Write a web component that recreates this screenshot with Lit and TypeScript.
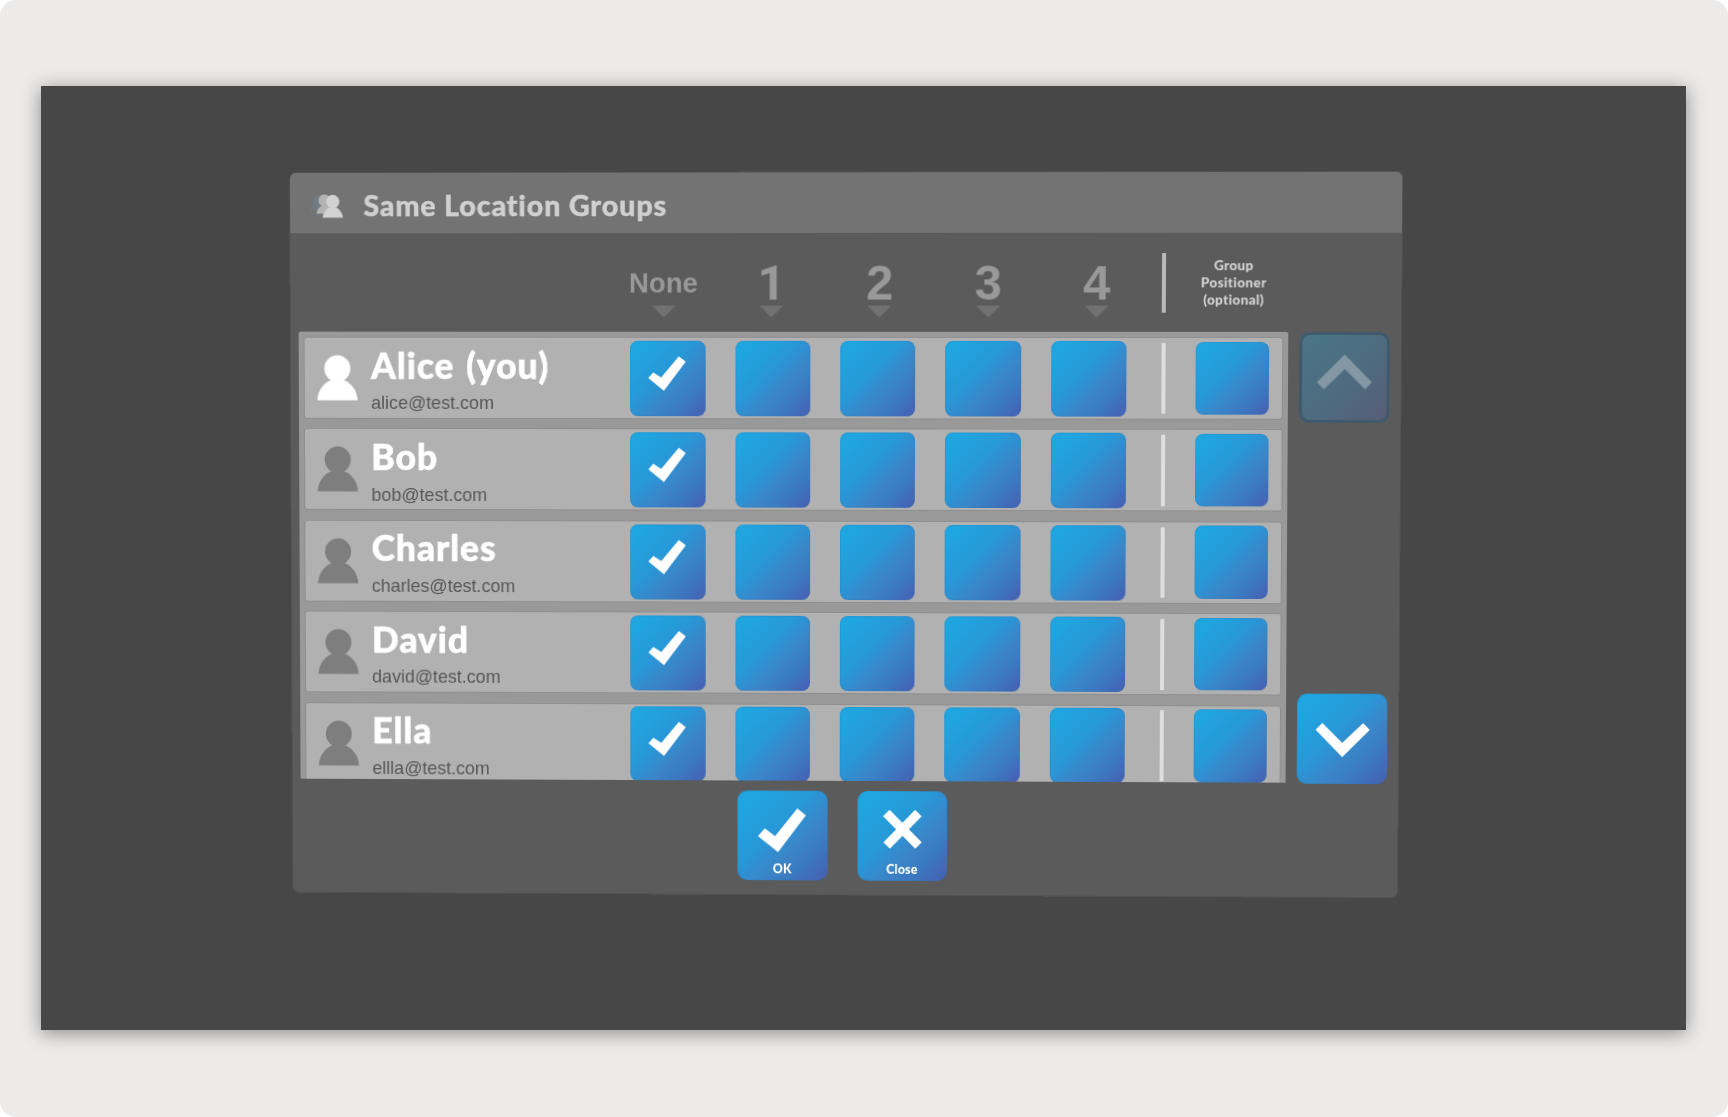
import { LitElement, html, css, svg } from "lit";
import { customElement, property } from "lit/decorators.js";

interface Person {
  name: string;
  email: string;
  you?: boolean;
}

const people: Person[] = [
  { name: "Alice (you)", email: "alice@test.com", you: true },
  { name: "Bob", email: "bob@test.com" },
  { name: "Charles", email: "charles@test.com" },
  { name: "David", email: "david@test.com" },
  { name: "Ella", email: "ellla@test.com" },
];

const groups = ["None", "1", "2", "3", "4"];

const icons = {
  tick: svg`<polygon points="18.3,37 23.3,31.4 31.3,36.6 49,15.4 56,20.7 34,49.7"/>`,
  ok: svg`<polygon points="20.7,45.7 27.7,38 38,45.7 60.4,17.7 69,24.7 41,61.7"/>`,
  close: svg`<path d="M29 22 61.4 54.6M61.2 22 29.4 54.6" stroke="currentColor" stroke-width="9.2"/>`,
  down: svg`<polygon points="18.6,36 25.3,29.3 45.3,49 66,29.3 72.7,36 45.3,63.3"/>`,
  up: svg`<polygon points="17.7,49.7 24.7,56.7 45.3,36.7 65.7,56.7 72.3,49.7 45.3,22.3"/>`,
};

@customElement("icon-tile")
export class IconTile extends LitElement {
  @property() icon = "";
  @property() label = "";
  @property({ type: Boolean }) disabled = false;

  static styles = css`
    :host { display: block; }
    .tile {
      box-sizing: border-box;
      width: 90.5px;
      height: 90px;
      border-radius: 10px;
      color: #fff;
      background: linear-gradient(135deg, #1fa6e0 10%, #2798d8 42%, #3a86c8 62%, #3b79c0 78%, #4661b3 97%);
      box-shadow: inset 0 0 0 1px rgba(45, 125, 185, 0.25);
      display: grid;
    }
    .tile > * { grid-area: 1 / 1; }
    .tile.disabled {
      color: #8397a4;
      background: linear-gradient(135deg, #487688, #4e6b7f 55%, #575c75);
      box-shadow: inset 0 0 0 3px #41596b;
    }
    .label {
      align-self: end;
      justify-self: center;
      font: 900 12.4px/16px Lato, "Noto Sans", sans-serif;
      letter-spacing: 0.2px;
      padding-bottom: 3.5px;
    }
    svg { display: block; }
  `;

  render() {
    return html`<div class="tile ${this.disabled ? "disabled" : ""}">
      <svg width="90" height="90" viewBox="0 0 90 90" fill="currentColor">
        ${icons[this.icon as keyof typeof icons]}
      </svg>
      ${this.label ? html`<span class="label">${this.label}</span>` : ""}
    </div>`;
  }
}

@customElement("person-row")
export class PersonRow extends LitElement {
  @property({ attribute: false }) person!: Person;

  static styles = css`
    :host { display: block; flex: none; }
    .row {
      box-sizing: border-box;
      width: 980px;
      height: 80px;
      border-radius: 2px;
      background: #b1b1b1;
      box-shadow: 0 0 0 1px #8f8f8f;
      display: flex;
      align-items: flex-start;
    }
    .avatar { flex: none; margin: 17px 13px 0 12px; color: #7e7e7e; }
    .avatar.you { color: #fff; }
    .who { width: 261.3px; padding-top: 9.5px; white-space: nowrap; }
    .name {
      font: 900 35.8px/36px Lato, "Noto Sans", sans-serif;
      letter-spacing: 0.9px;
      word-spacing: 2.5px;
      -webkit-text-stroke: 0.5px #fff;
      color: #fff;
    }
    .email { margin-top: 9.7px; font: 18.1px/20px "Liberation Sans", Arial, sans-serif; color: #575757; }
    .boxes { display: flex; gap: 30px; padding-top: 2.8px; }
    .box {
      width: 75.4px;
      height: 75px;
      border-radius: 8px;
      color: #fff;
      background: linear-gradient(135deg, #1fa6e0 10%, #2798d8 42%, #3a86c8 62%, #3b79c0 78%, #4661b3 97%);
      box-shadow: inset 0 0 0 1px rgba(45, 125, 185, 0.25);
    }
    .positioner { width: 73px; height: 72.5px; margin: 3.6px 0 0 30.2px; }
    .rule { width: 4.5px; height: 70.5px; margin: 4.9px 0 0 34.3px; background: #dedede; }
    svg { display: block; }
  `;

  render() {
    const p = this.person;
    return html`<div class="row">
      <svg class="avatar ${p.you ? "you" : ""}" width="42" height="46" viewBox="0 0 42 46" fill="currentColor">
        <circle cx="21" cy="13.8" r="13.2" />
        <path d="M.5 45.5C1.5 34 8 28 14 25.5h14C34 28 40.5 34 41.5 45.5Z" />
      </svg>
      <div class="who">
        <div class="name">${p.name}</div>
        <div class="email">${p.email}</div>
      </div>
      <div class="boxes">
        ${groups.map(
          (g) => html`<div class="box">
            ${g === "None"
              ? html`<svg width="75" height="75" viewBox="0 0 75 75" fill="currentColor">${icons.tick}</svg>`
              : ""}
          </div>`
        )}
      </div>
      <div class="rule"></div>
      <div class="box positioner"></div>
    </div>`;
  }
}

@customElement("app-root")
export class AppRoot extends LitElement {
  static styles = css`
    :host { display: block; background: #fff; }
    .page {
      box-sizing: border-box;
      width: 1728px;
      height: 1117px;
      padding: 86px 42px 87px 41px;
      border-radius: 16px;
      background: #ecebe9;
    }
    .stage {
      box-sizing: border-box;
      height: 944px;
      padding: 87.4px 0 0 248.7px;
      background: #474747;
      box-shadow: 0 3px 18px rgba(0, 0, 0, 0.42);
    }
    /* The dialog hangs in 3D space, turned slightly away from the viewer. */
    .dialog {
      width: 1111.5px;
      height: 720px;
      border-radius: 6px;
      overflow: hidden;
      background: #5b5b5b;
      box-shadow: 0 0 0 1px #505050;
      transform-origin: 0 0;
      transform: matrix3d(
        0.990836, -0.001069, 0, -0.0000084817,
        0.0044785, 1.005836, 0, 0.0000106325,
        0, 0, 1, 0,
        0, 0, 0, 1
      );
    }
    .title {
      box-sizing: border-box;
      height: 60px;
      padding-left: 20px;
      display: flex;
      align-items: center;
      background: #737373;
      color: #d0d0d0;
    }
    .title svg { margin-top: 5px; }
    .title h1 {
      margin: 3.5px 0 0 20px;
      font: 900 28.8px/34px Lato, "Noto Sans", sans-serif;
      font-variant-ligatures: none;
      letter-spacing: 0.87px;
      -webkit-text-stroke: 0.4px #d0d0d0;
      white-space: nowrap;
    }
    .heads { height: 98px; padding-left: 321.4px; box-sizing: border-box; display: flex; }
    .head {
      box-sizing: border-box;
      width: 108.4px;
      padding-bottom: 14px;
      display: flex;
      flex-direction: column;
      justify-content: flex-end;
      align-items: center;
      font: 700 49px/35px "Liberation Sans", Arial, sans-serif;
      color: #999;
    }
    .head.one { font-family: Roboto, "Liberation Sans", sans-serif; }
    .head.none { font-size: 27.7px; line-height: 20px; }
    .head.none .arrow { margin-top: 12.5px; }
    .arrow { margin-top: 5px; display: block; }
    .rule { width: 4.5px; height: 58.5px; margin: 20px 0 0 10.4px; background: #b9b9b9; }
    .optional {
      width: 134.4px;
      padding-top: 24.4px;
      text-align: center;
      font: 900 13.5px/17px Lato, "Noto Sans", sans-serif;
      font-variant-ligatures: none;
      letter-spacing: 0.35px;
      color: #d4d4d4;
    }
    .body { display: flex; padding-left: 8px; gap: 10.5px; height: 448px; }
    .list {
      box-sizing: border-box;
      width: 992px;
      height: 447.8px;
      padding: 6px;
      overflow: hidden;
      border-radius: 2px 2px 0 0;
      background: #999;
      display: flex;
      flex-direction: column;
      gap: 11.4px;
    }
    .scroll { display: flex; flex-direction: column; justify-content: space-between; height: 449px; }
    .actions { display: flex; gap: 30px; padding: 10px 0 0 450px; }
  `;

  render() {
    return html`<div class="page">
      <div class="stage">
        <div class="dialog">
          <div class="title">
            <svg width="34" height="26" viewBox="0 0 34 26">
              <g fill="#727b82">
                <circle cx="7.3" cy="7.3" r="5.3" />
                <path d="M0 17.5C.8 14 3 12 5 11h6v6.5Z" />
              </g>
              <g fill="#b4b4b4">
                <circle cx="14.6" cy="7.3" r="6" />
                <path d="M6.5 20.5C7 16.5 9.5 14 12 12.5h8v8Z" />
              </g>
              <g fill="#d2d2d2">
                <circle cx="23" cy="8.5" r="6.7" />
                <path d="M12.7 24.5C13.4 19 16.5 16 19.5 14.3h7C29.5 16 32.5 19 33.3 24.5Z" />
              </g>
            </svg>
            <h1>Same Location Groups</h1>
          </div>
          <div class="heads">
            ${groups.map(
              (g) => html`<div class="head ${g === "None" ? "none" : g === "1" ? "one" : ""}">
                ${g}
                <svg class="arrow" width="24" height="12" viewBox="0 0 24 12"><path d="M0 0h24L12 12Z" fill="#717171" /></svg>
              </div>`
            )}
            <div class="rule"></div>
            <div class="optional">Group<br />Positioner<br />(optional)</div>
          </div>
          <div class="body">
            <div class="list">${people.map((p) => html`<person-row .person=${p}></person-row>`)}</div>
            <div class="scroll">
              <icon-tile icon="up" disabled></icon-tile>
              <icon-tile icon="down"></icon-tile>
            </div>
          </div>
          <div class="actions">
            <icon-tile icon="ok" label="OK"></icon-tile>
            <icon-tile icon="close" label="Close"></icon-tile>
          </div>
        </div>
      </div>
    </div>`;
  }
}
